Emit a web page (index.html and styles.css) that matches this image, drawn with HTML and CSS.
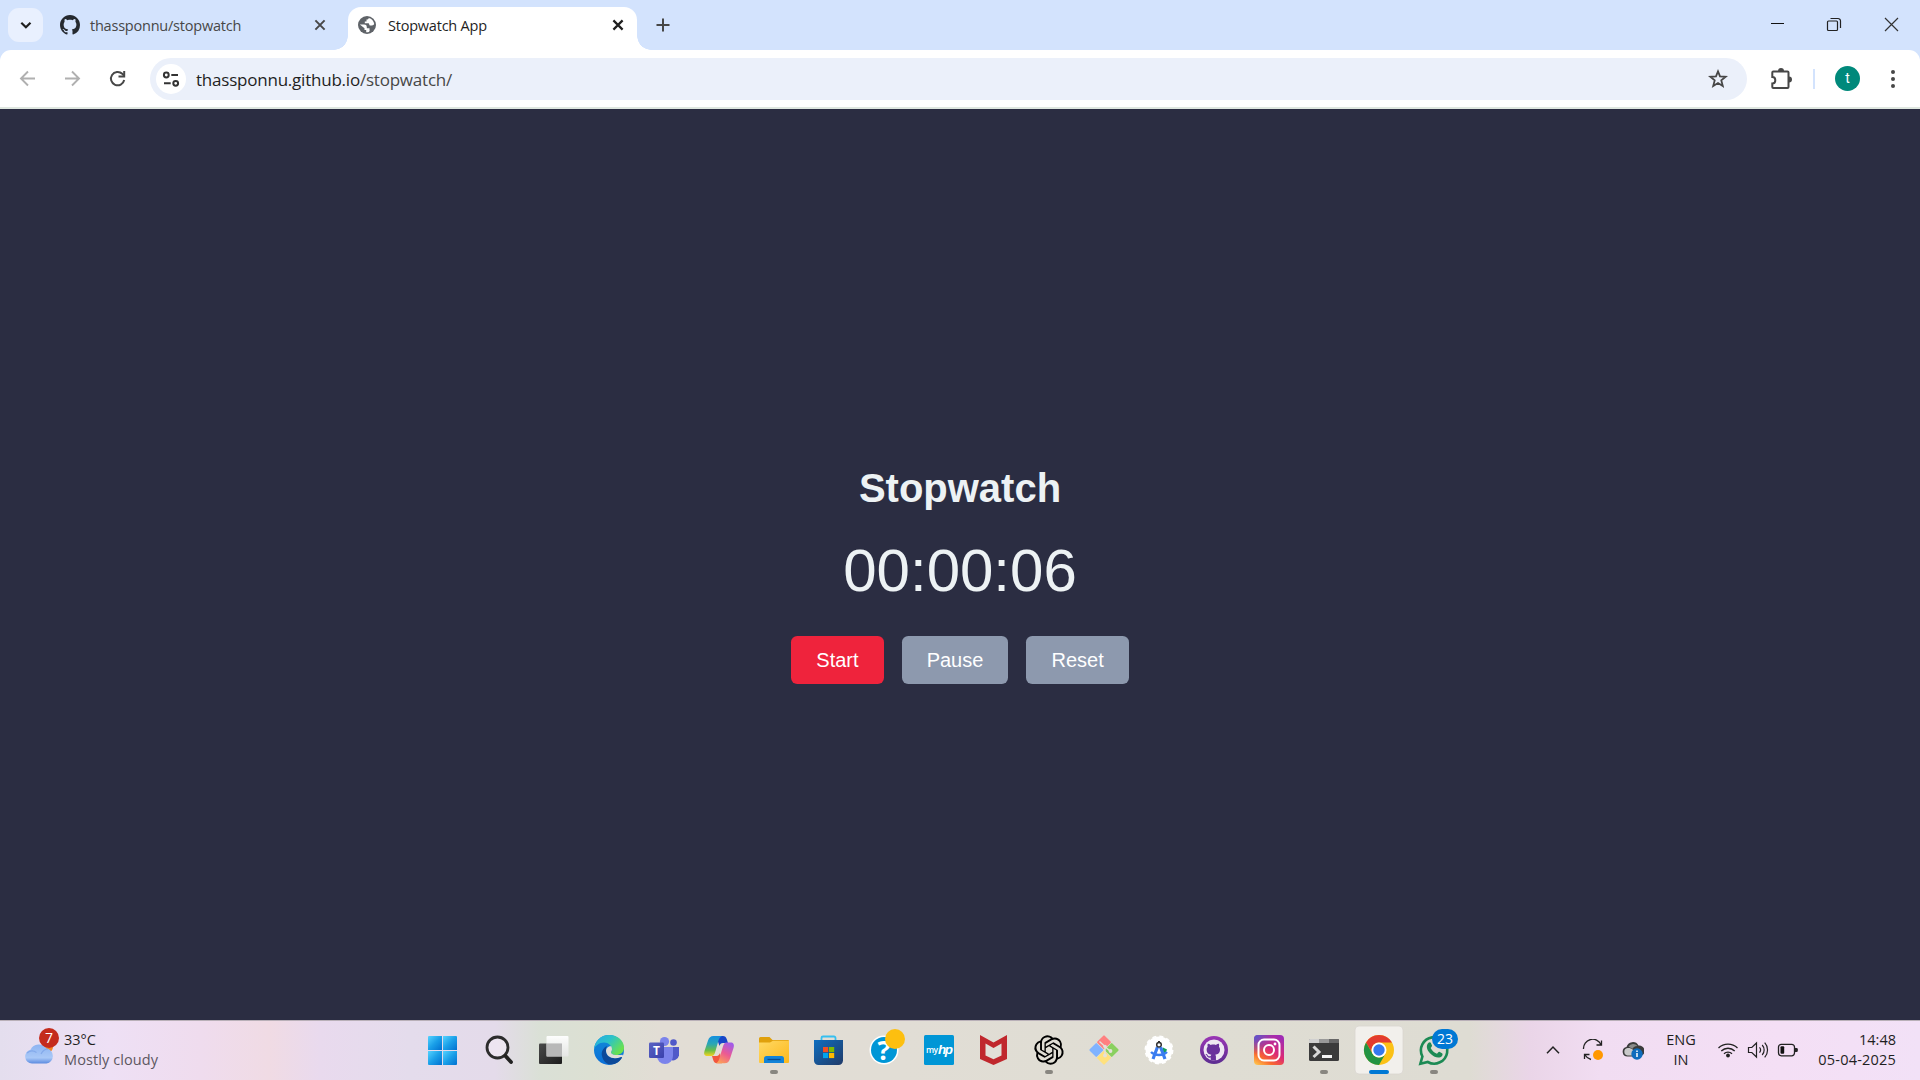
FILE: index.html
```html
<!DOCTYPE html>
<html lang="en">
<head>
<meta charset="utf-8">
<title>Stopwatch App</title>
<link rel="stylesheet" href="styles.css">
</head>
<body>
<svg width="0" height="0" class="defs" aria-hidden="true">
  <defs>
    <path id="octocat" d="M8 0C3.58 0 0 3.58 0 8c0 3.54 2.29 6.53 5.47 7.59.4.07.55-.17.55-.38 0-.19-.01-.82-.01-1.49-2.01.37-2.53-.49-2.69-.94-.09-.23-.48-.94-.82-1.13-.28-.15-.68-.52-.01-.53.63-.01 1.08.58 1.23.82.72 1.21 1.87.87 2.33.66.07-.52.28-.87.51-1.07-1.78-.2-3.64-.89-3.64-3.95 0-.87.31-1.59.82-2.15-.08-.2-.36-1.02.08-2.12 0 0 .67-.21 2.2.82.64-.18 1.32-.27 2-.27s1.36.09 2 .27c1.53-1.04 2.2-.82 2.2-.82.44 1.1.16 1.92.08 2.12.51.56.82 1.27.82 2.15 0 3.07-1.87 3.75-3.65 3.95.29.25.54.73.54 1.48 0 1.07-.01 1.93-.01 2.2 0 .21.15.46.55.38A8.01 8.01 0 0 0 16 8c0-4.42-3.58-8-8-8z"/>
    <linearGradient id="winG" x1="0" y1="0" x2="1" y2="1"><stop offset="0" stop-color="#55d3ff"/><stop offset=".5" stop-color="#1a9fe8"/><stop offset="1" stop-color="#0070d0"/></linearGradient>
    <linearGradient id="darkG" x1="0" y1="0" x2="1" y2="1"><stop offset="0" stop-color="#4a4a4a"/><stop offset="1" stop-color="#1c1c1c"/></linearGradient>
    <linearGradient id="lightG" x1="0" y1="0" x2="0" y2="1"><stop offset="0" stop-color="#fff" stop-opacity=".95"/><stop offset="1" stop-color="#e8e8e8" stop-opacity=".8"/></linearGradient>
    <linearGradient id="edgeTop" x1="0" y1="0" x2="1" y2=".6"><stop offset="0" stop-color="#25a9e8"/><stop offset=".5" stop-color="#2cc3c7"/><stop offset="1" stop-color="#6be24c"/></linearGradient>
    <linearGradient id="edgeLeft" x1="0" y1="0" x2="0" y2="1"><stop offset="0" stop-color="#118bd8"/><stop offset="1" stop-color="#0b6fd8"/></linearGradient>
    <linearGradient id="teamsG" x1="0" y1="0" x2="1" y2="1"><stop offset="0" stop-color="#5a62c3"/><stop offset="1" stop-color="#3a41ac"/></linearGradient>
    <linearGradient id="copA" x1="0" y1="0" x2="0" y2="1"><stop offset="0" stop-color="#1490e0"/><stop offset=".4" stop-color="#2aa6b5"/><stop offset=".72" stop-color="#6bbd45"/><stop offset="1" stop-color="#f4d321"/></linearGradient>
    <linearGradient id="copB" x1=".7" y1="0" x2=".2" y2="1"><stop offset="0" stop-color="#a25be8"/><stop offset=".5" stop-color="#ec5a92"/><stop offset="1" stop-color="#fda255"/></linearGradient>
    <linearGradient id="folderG" x1="0" y1="0" x2="1" y2="1"><stop offset="0" stop-color="#ffd965"/><stop offset="1" stop-color="#fcb81b"/></linearGradient>
    <linearGradient id="storeG" x1="0" y1="0" x2="1" y2="1"><stop offset="0" stop-color="#0e6ec0"/><stop offset="1" stop-color="#213a68"/></linearGradient>
    <linearGradient id="ghG" x1="0" y1="0" x2="0" y2="1"><stop offset="0" stop-color="#9a35b5"/><stop offset="1" stop-color="#5c2d91"/></linearGradient>
    <linearGradient id="igG" x1=".1" y1="1" x2=".75" y2="0"><stop offset="0" stop-color="#ffc24a"/><stop offset=".25" stop-color="#f9682f"/><stop offset=".55" stop-color="#dc2a75"/><stop offset="1" stop-color="#a02bb4"/></linearGradient>
    <radialGradient id="igBlue" cx="0" cy="0" r=".65"><stop offset="0" stop-color="#4f5bd5"/><stop offset="1" stop-color="#4f5bd5" stop-opacity="0"/></radialGradient>
    <linearGradient id="cloudG" x1="0" y1="0" x2="0" y2="1"><stop offset="0" stop-color="#8db4f2"/><stop offset=".7" stop-color="#a9c8f7"/><stop offset="1" stop-color="#5b8be0"/></linearGradient>
  </defs>
</svg>

<header class="browser">
  <div class="tabstrip">
    <button class="tab-search" aria-label="Search tabs"><svg width="35" height="34" viewBox="0 0 35 34"><path d="M13.3 14.8l4.6 4.4 4.6-4.4" fill="none" stroke="#1f1f1f" stroke-width="2.2"/></svg></button>
    <div class="tab">
      <svg class="favicon" width="20" height="20" viewBox="0 0 16 16"><use href="#octocat" fill="#24292f"/></svg>
      <span class="tab-title muted">thassponnu/stopwatch</span>
      <svg class="tab-close" width="20" height="20" viewBox="-10 -10 20 20"><path d="M-4.6-4.6l9.2 9.2M4.6-4.6l-9.2 9.2" stroke="#474747" stroke-width="2"/></svg>
    </div>
    <div class="tab active">
      <svg class="globe" width="18" height="18" viewBox="0 0 18 18"><circle cx="9" cy="9" r="9" fill="#5f6368"/><path d="M10.800 1.900C10.500 3 9.700 3.500 8.500 3.600v1.800H6.800v1.900h3.900l1 2.100H14c1.100 0 1.900-.7 2.200-1.400a7.300 7.300 0 0 0-5.400-6.100zM1.800 8.500l4.300.1c1.700 0 2.600.8 2.700 2.300v1.300h2.700v1.500c.4.900 0 1.700-.6 2.200a7.300 7.300 0 0 1-2.700.3v-2.200H6.500v-1.700z" fill="#fff"/></svg>
      <span class="tab-title">Stopwatch App</span>
      <svg class="tab-close" width="20" height="20" viewBox="-10 -10 20 20"><path d="M-4.600-4.600l9.200 9.200M4.600-4.600l-9.200 9.200" stroke="#1f1f1f" stroke-width="2.200"/></svg>
    </div>
    <svg class="new-tab" width="20" height="20" viewBox="-10 -10 20 20"><path d="M-6.500 0h13M0-6.500v13" stroke="#474747" stroke-width="2"/></svg>
    <div class="window-controls">
      <svg width="57" height="50" viewBox="-28.500 -25 57 50"><path d="M-6.500-1.500h13" stroke="#111" stroke-width="1"/></svg>
      <svg width="57" height="50" viewBox="-28.500 -25 57 50"><rect x="-7" y="-4" width="10" height="9.500" rx="1" fill="none" stroke="#222" stroke-width="1.200"/><path d="M-4-6.500h7.500a2.500 2.500 0 0 1 2.500 2.500v7" fill="none" stroke="#222" stroke-width="1.200"/></svg>
      <svg width="57" height="50" viewBox="-28.500 -25 57 50"><path d="M-6.500-7L6.500 6M6.500-7L-6.500 6" stroke="#333" stroke-width="1.200"/></svg>
    </div>
  </div>
  <div class="toolbar">
    <div class="nav">
      <svg width="45" height="45" viewBox="-22.500 -22.500 45 45"><path d="M7.500 0H-6M0.500-7L-6.500 0l7 7" fill="none" stroke="#b0b0b0" stroke-width="1.900"/></svg>
      <svg width="45" height="45" viewBox="-22.500 -22.500 45 45"><path d="M-7.500 0H6M-.500-7l7 7-7 7" fill="none" stroke="#b0b0b0" stroke-width="1.900"/></svg>
      <svg width="45" height="45" viewBox="-22.500 -22.500 45 45"><path d="M6.700 1.500A6.700 6.700 0 1 1 4.800-4.700L6.500-3" fill="none" stroke="#474747" stroke-width="2"/><path d="M6.700-7.500v5.600H1" fill="none" stroke="#474747" stroke-width="2"/></svg>
    </div>
    <div class="omnibox">
      <span class="site-info"><svg width="30" height="30" viewBox="-15 -15 30 30"><g fill="none" stroke="#333" stroke-width="2"><circle cx="-4.700" cy="-4" r="2.400"/><path d="M.3-4h6.700M-7 4.300h6.700"/><circle cx="4.700" cy="4.300" r="2.400"/></g></svg></span>
      <span class="url"><b>thassponnu.github.io</b>/stopwatch/</span>
      <svg class="star" width="20" height="20" viewBox="-10 -10 20 20"><path d="M0-7.600l2 5 5.700.4-4.400 3.600 1.500 5.700L0 4-4.800 7.100l1.500-5.700-4.400-3.600 5.700-.4z" fill="none" stroke="#474747" stroke-width="1.800"/></svg>
    </div>
    <svg class="ext" width="24" height="24" viewBox="-12 -12 24 24"><path d="M-7.700-7.500H6.500a1 1 0 0 1 1 1V8a1 1 0 0 1-1 1h-14.200a1 1 0 0 1-1-1V4.500c4 0 4-6.500 0-6.500v-4.500a1 1 0 0 1 1-1z" fill="none" stroke="#474747" stroke-width="2"/><path d="M-3-8a3 3 0 0 1 6 0zM8-2.500a3 3 0 0 1 0 6z" fill="#474747"/></svg>
    <span class="divider"></span>
    <span class="avatar">t</span>
    <svg class="dots" width="8" height="24" viewBox="-4 -12 8 24"><g fill="#474747"><circle cy="-7" r="2"/><circle r="2"/><circle cy="7" r="2"/></g></svg>
  </div>
</header>

<main class="page">
  <h1>Stopwatch</h1>
  <div class="time">00:00:06</div>
  <div class="buttons">
    <button class="btn start">Start</button>
    <button class="btn">Pause</button>
    <button class="btn">Reset</button>
  </div>
</main>

<footer class="taskbar">
  <div class="weather">
    <div class="weather-icon">
      <svg width="32" height="24" viewBox="0 0 32 24"><circle cx="23.500" cy="6" r="5.500" fill="#f58220"/><path d="M8 22.500a7 7 0 0 1-1.500-13.800A9.200 9.200 0 0 1 22.500 7.500a7.600 7.600 0 0 1 0 15z" fill="url(#cloudG)"/><path d="M3 12c3-2.500 6.500-2.500 9.500-.5M17 13c1.500-3 4-5 7-5" fill="none" stroke="#779fe6" stroke-width="1.200" opacity=".7"/></svg>
      <span class="alert">7</span>
    </div>
    <div class="weather-text"><span>33°C</span><span class="dim">Mostly cloudy</span></div>
  </div>

  <nav class="apps">
    <svg class="app" viewBox="-28 -30 55 60"><g fill="url(#winG)"><path d="M-16-13a1 1 0 0 1 1-1h13v14h-14z"/><path d="M-1-14h13a1 1 0 0 1 1 1v13h-14z"/><path d="M-16 1h14v14h-13a1 1 0 0 1-1-1z"/><path d="M-1 1h14v13a1 1 0 0 1-1 1h-13z"/></g></svg>
    <svg class="app" viewBox="-28 -30 55 60"><circle cx="-1.500" cy="-2.500" r="10.500" fill="#f1eaf3" fill-opacity=".7" stroke="#2c2c2c" stroke-width="2.800"/><path d="M6.500 6l5.500 6" stroke="#222" stroke-width="3.800" stroke-linecap="round"/></svg>
    <svg class="app" viewBox="-28 -30 55 60"><rect x="-15" y="-6.500" width="23" height="20.500" rx="1" fill="url(#darkG)"/><rect x="-7.500" y="-14" width="22" height="20.500" rx="1" fill="url(#lightG)"/><rect x="-7.500" y="-6.500" width="15.500" height="13" fill="#b8b8b8"/></svg>
    <svg class="app" viewBox="-28 -30 55 60"><circle r="15" fill="url(#edgeLeft)"/><path d="M-15-1C-14-9-8-15 0-15 9-15 15-9 15-2.500 15 3 11 5 7 5 3.500 5 2 3.500 2 2.300 2 1.300 3 1 3-1 3-4-.5-7.500-5-7.500-10-7.500-14-4-15-1z" fill="url(#edgeTop)"/><path d="M-2-4C-6-2-8 2-7 6c1 5 5 8.500 9 8.500 5 0 9-3 11-7 .2-.6-.4-.8-1-.5C4 10-2.500 7-3 1c-.1-2.200.5-3.800 1-5z" fill="#0c4a9a"/><path d="M2.500-3.500C0-4.500-3-2-3 1c.5 6 7 9 15 6 .6-.3 1.100 0 1 .5l1.500-.5-1-2.300C11 5 9 5.200 7 5 3.500 5 2 3.500 2 2.300 2 1.300 3 1 3-1z" fill="#e1ded7"/></svg>
    <svg class="app" viewBox="-28 -30 55 60"><circle cx="9.500" cy="-7.500" r="3.300" fill="#5059c9"/><path d="M5-3h10v8.500a6 6 0 0 1-9 4z" fill="#5059c9"/><circle cx=".5" cy="-8.500" r="4.600" fill="#7b83eb"/><path d="M-7-3H9v9a7.500 7.500 0 0 1-16 0z" fill="#7b83eb"/><rect x="-15" y="-7.500" width="15" height="15.500" rx="1.300" fill="url(#teamsG)"/><text x="-7.500" y="4.800" class="teams-t">T</text></svg>
    <svg class="app" viewBox="-28 -30 55 60"><path d="M-3-14H4c2 0 3 1 3.700 3L9-7H4c-2 0-3 1-3.500 3z" fill="#1746c8"/><path d="M3 13.200h-5c-2 0-3-1-3.700-3L-7 6h4.500c2 0 3-1.500 3.500-3z" fill="#f2563d"/><path d="M1-14h-6.500c-3 0-4.500 1.500-5.500 4.500L-14.500 1c-1 3.500 0 5 3 5h4c2 0 3-1.500 3.700-4l3-10.500C-.2-11 .8-13 3-14z" fill="url(#copA)"/><path d="M-1 13.200h6.500c3 0 4.500-1.500 5.500-4.500L14.500-2c1-3.500 0-5.500-3-5.500h-4c-2 0-3 2-3.700 4.500l-3 10C.2 10-.8 12.200-3 13.200z" fill="url(#copB)"/></svg>
    <svg class="app" viewBox="-28 -30 55 60"><path d="M-15-11.500a1.500 1.500 0 0 1 1.500-1.500h9l3 3H14a1 1 0 0 1 1 1v6h-30z" fill="#e0a00c"/><path d="M-15-7.500h11l3-1.800h16V12a1 1 0 0 1-1 1h-28a1 1 0 0 1-1-1z" fill="url(#folderG)"/><path d="M-10 13V8.500A2.500 2.500 0 0 1-7.500 6h15A2.500 2.500 0 0 1 10 8.500V13z" fill="#1383d8"/><path d="M-6.500 9.500h13" stroke="#0b4c8f" stroke-width="1.300"/><rect x="-4" y="20" width="8" height="4" rx="2" fill="#888680"/></svg>
    <svg class="app" viewBox="-28 -30 55 60"><path d="M-7.500-9v-3a1.500 1.500 0 0 1 1.500-1.500h11A1.500 1.500 0 0 1 6.500-12v3" fill="none" stroke="#35bff0" stroke-width="1.800"/><path d="M-15-10h29v20.500a4.500 4.500 0 0 1-4.500 4.500h-20a4.500 4.500 0 0 1-4.500-4.500z" fill="url(#storeG)"/><path d="M-6-3h5.200v5.200H-6z" fill="#f25022"/><path d="M0-3h5.200v5.200H0z" fill="#7fba00"/><path d="M-6 3h5.200v5.100H-6z" fill="#00a4ef"/><path d="M0 3h5.200v5.100H0z" fill="#ffb900"/></svg>
    <svg class="app" viewBox="-28 -30 55 60"><circle r="14.500" fill="#fff"/><circle r="13" fill="#0096d6"/><text x="0" y="9.500" class="help-q">?</text><circle cx="11" cy="-11" r="10" fill="#fdbf0f"/></svg>
    <svg class="app" viewBox="-28 -30 55 60"><rect x="-15" y="-15" width="30" height="30" rx="1.500" fill="#0096d6"/><text x="-13" y="3" class="my">my</text><text x="-1" y="4" class="hp">hp</text></svg>
    <svg class="app" viewBox="-28 -30 55 60"><path d="M-14-15L-.5-7.500 13-15V9L-.5 15-14 9z" fill="#c0272d"/><path d="M-8.500-6.500l8 4.500 8-4.500V5.500l-8 3.800-8-3.800z" fill="#e2dfd8"/></svg>
    <svg class="app" viewBox="-28 -30 55 60"><g transform="translate(-14.700 -14.700) scale(1.225)"><path d="M22.282 9.821a5.985 5.985 0 0 0-.516-4.911 6.046 6.046 0 0 0-6.510-2.900A6.065 6.065 0 0 0 4.981 4.182a5.985 5.985 0 0 0-3.998 2.900 6.046 6.046 0 0 0 .743 7.097 5.980 5.980 0 0 0 .511 4.911 6.051 6.051 0 0 0 6.515 2.900A5.985 5.985 0 0 0 13.260 24a6.056 6.056 0 0 0 5.772-4.206 5.989 5.989 0 0 0 3.998-2.900 6.056 6.056 0 0 0-.748-7.073zM13.260 22.429a4.476 4.476 0 0 1-2.876-1.041l.142-.080 4.778-2.758a.795.795 0 0 0 .393-.681v-6.737l2.020 1.169a.071.071 0 0 1 .038.052v5.583a4.504 4.504 0 0 1-4.495 4.494zM3.599 18.304a4.471 4.471 0 0 1-.535-3.014l.142.085 4.783 2.758a.771.771 0 0 0 .781 0l5.843-3.369v2.332a.080.080 0 0 1-.033.062L9.740 19.950a4.499 4.499 0 0 1-6.141-1.646zM2.341 7.896a4.485 4.485 0 0 1 2.366-1.973V11.600a.766.766 0 0 0 .388.677l5.814 3.354-2.020 1.169a.076.076 0 0 1-.071 0l-4.830-2.787A4.504 4.504 0 0 1 2.341 7.872zM18.937 11.751L13.104 8.364 15.119 7.200a.076.076 0 0 1 .071 0l4.830 2.791a4.494 4.494 0 0 1-.677 8.104v-5.677a.790.790 0 0 0-.407-.667zM20.948 8.728l-.142-.085-4.774-2.782a.776.776 0 0 0-.785 0L9.409 9.230V6.897a.066.066 0 0 1 .028-.062l4.830-2.787a4.499 4.499 0 0 1 6.680 4.660zM8.307 12.863l-2.020-1.164a.080.080 0 0 1-.038-.057V6.074a4.499 4.499 0 0 1 7.376-3.454l-.142.081L8.704 5.459a.795.795 0 0 0-.393.681zM9.404 10.498l2.602-1.500 2.607 1.500v2.999l-2.597 1.500-2.607-1.500z" fill="#000"/></g><rect x="-4" y="20" width="8" height="4" rx="2" fill="#888680"/></svg>
    <svg class="app" viewBox="-28 -30 55 60"><g transform="rotate(45)"><rect x="-10.600" y="-10.600" width="10.300" height="10.300" rx="1" fill="#ff8080"/><rect x=".3" y="-10.600" width="10.300" height="10.300" rx="1" fill="#8ad05f"/><rect x=".3" y=".3" width="10.300" height="10.300" rx="1" fill="#ffe17d"/><rect x="-10.600" y=".3" width="10.300" height="10.300" rx="1" fill="#80b3ff"/></g><path d="M-4.500-8.500L1-3.500v9M1-3.500l5 4.500" fill="none" stroke="#e4e1da" stroke-width="1.400"/><g fill="#e4e1da"><circle cx="1" cy="-3.500" r="1.800"/><circle cx="1" cy="5.500" r="1.900"/><circle cx="6.500" cy="1" r="1.900"/></g></svg>
    <svg class="app" viewBox="-28 -30 55 60"><circle r="13.400" fill="#fff"/><circle r="13.700" fill="none" stroke="#fff" stroke-width="1.500" stroke-dasharray="4 3.170"/><path d="M4-2.500L8-.5 6.500 3H2z" fill="#13a05c"/><path d="M-1.500-3L-6 9M1.500-3L6 9" stroke="#3a7cf0" stroke-width="3.200"/><path d="M-8 2c4 4 12 4 16 0" fill="none" stroke="#3a7cf0" stroke-width="2.400"/><path d="M0-9v4" stroke="#333" stroke-width="2"/><circle cy="-5.300" r="2.300" fill="#fff" stroke="#333" stroke-width="1.500"/></svg>
    <svg class="app" viewBox="-28 -30 55 60"><circle r="14" fill="url(#ghG)"/><circle r="10.500" fill="#eee7f2"/><g transform="translate(-10.500 -10.500) scale(1.313)"><path d="M5.470 15.590V13.720c-2.010.370-2.530-.490-2.690-.940-.090-.230-.480-.940-.820-1.130-.280-.150-.680-.520-.010-.530.630-.010 1.080.580 1.230.820.720 1.210 1.870.870 2.330.660.070-.520.280-.870.510-1.070-1.780-.200-3.640-.890-3.640-3.950 0-.870.310-1.590.820-2.150-.080-.200-.360-1.020.080-2.120 0 0 .670-.210 2.200.820.640-.180 1.320-.270 2-.270s1.360.090 2 .270c1.530-1.040 2.200-.820 2.200-.820.440 1.100.160 1.920.080 2.120.510.560.820 1.270.820 2.150 0 3.070-1.870 3.750-3.650 3.950.290.250.540.730.540 1.480v3.200z" fill="#69309c"/></g></svg>
    <svg class="app" viewBox="-28 -30 55 60"><rect x="-15" y="-15" width="30" height="30" rx="4" fill="url(#igG)"/><rect x="-15" y="-15" width="30" height="30" rx="4" fill="url(#igBlue)"/><g fill="none" stroke="#fff" stroke-width="2"><rect x="-10.500" y="-10.500" width="21" height="21" rx="5.500"/><circle r="5"/></g><circle cx="6" cy="-6" r="1.400" fill="#fff"/></svg>
    <svg class="app" viewBox="-28 -30 55 60"><rect x="-15" y="-11" width="30" height="22" rx="1.500" fill="#3b3b3b"/><path d="M-15-7v-3a1 1 0 0 1 1-1h9v4z" fill="#d0d0d0"/><path d="M-5-11H5v4H-5z" fill="#999"/><path d="M5-11h9a1 1 0 0 1 1 1v3H5z" fill="#666"/><path d="M-10.500-3.500L-5 2l-5.500 5" fill="none" stroke="#d8d8d8" stroke-width="3"/><path d="M-2 6.500H8" stroke="#f4f4f4" stroke-width="3"/><rect x="-4" y="20" width="8" height="4" rx="2" fill="#888680"/></svg>
    <svg class="app" viewBox="-28 -30 55 60"><rect x="-24" y="-24" width="48" height="48" rx="4" fill="#f2f0ec" stroke="#d9d6d0" stroke-width=".8"/><circle r="15" fill="#fbc116"/><path d="M-13-7.500A15 15 0 0 1 13-7.500H0A7.500 7.500 0 0 0-6.500 3.750z" fill="#e33b2e"/><path d="M-13-7.500L-6.500 3.750A7.500 7.500 0 0 0 6.500 3.750L0 15A15 15 0 0 1-13-7.500z" fill="#229342"/><circle r="7.500" fill="#fff"/><circle r="5.700" fill="#3578ee"/><rect x="-10" y="20" width="20" height="4" rx="2" fill="#0078d4"/></svg>
    <svg class="app wide" viewBox="-28 -30 55 60"><path d="M-13.600 13.700l2-7.200A13.200 13.200 0 1 1-6.200 12z" fill="none" stroke="#1c8a54" stroke-width="2.600"/><path d="M-5.500-7.200c.8-.8 2-.7 2.400.2l1.100 2.600c.3.700-.9 2-1.400 2.500C-2 .8 0 2.600 3 3.700c.6-.5 1.700-2.200 2.400-1.900L8 3.200c.9.400.6 1.900 0 2.700C5.500 9 0 7.500-4 3.300-7.500-.5-8.200-4.500-5.500-7.200z" fill="#1c8a54"/><rect x="-2" y="-21" width="26" height="20" rx="10" fill="#0078d4"/><text x="11" y="-6" class="badge">23</text><rect x="-4" y="20" width="8" height="4" rx="2" fill="#888680"/></svg>
  </nav>

  <div class="tray">
    <svg width="20" height="20" viewBox="-10 -10 20 20"><path d="M-6 3.200L0-3l6 6.200" fill="none" stroke="#222" stroke-width="1.500"/></svg>
    <svg class="sync" width="22" height="22" viewBox="-11 -11 22 22"><path d="M-9.500-1A9.200 9.200 0 0 1 8-5.500M8.500-9.500V-5H3.500M-3.500 4.500h-5V9M-8 5c1.500 2.500 3.500 3.800 6 4.500" fill="none" stroke="#222" stroke-width="1.300"/><circle cx="5" cy="5" r="5" fill="#ff9800"/></svg>
    <svg class="cloud" width="22" height="22" viewBox="-11 -11 22 22"><path d="M-5.500 6.500a4.800 4.800 0 0 1-1-9.500A6.500 6.500 0 0 1 5.500-4.500a5.500 5.500 0 0 1 1 11z" fill="#3b3b3b"/><path d="M-5.500 5.500a3.800 3.800 0 0 1 0-7.500c3-.5 7 1 9 7.500z" fill="#c9c9c9"/><path d="M-4.500-3.500a5.500 5.500 0 0 1 9-.5c-3 0-4.500 1.500-5.300 3-1-.9-2-1.500-3.700-2.500z" fill="#8b8b8b"/><circle cx="4" cy="4" r="5.700" fill="#0f6cbd"/><path d="M4 3v4M4 .5v1.400" stroke="#fff" stroke-width="1.500"/></svg>
    <div class="lang"><span>ENG</span><span>IN</span></div>
    <svg class="wifi" width="22" height="22" viewBox="-11 -11 22 22"><g fill="none" stroke="#222" stroke-width="1.300"><path d="M-9.500-2a13.500 13.500 0 0 1 19 0M-6.700 1a9.500 9.500 0 0 1 13.400 0M-4 3.800a5.700 5.700 0 0 1 8 0"/></g><circle cy="5.500" r="1.900" fill="#222"/></svg>
    <svg class="sound" width="22" height="22" viewBox="-11 -11 22 22"><g fill="none" stroke="#222" stroke-width="1.200"><path d="M-9.500-2.500h3.300L-1.500-7V7l-4.700-4.500h-3.300z"/><path d="M1.500-2.600a4 4 0 0 1 0 5.200M4.200-5a7.400 7.400 0 0 1 0 10M6.700-7.300a10.800 10.800 0 0 1 0 14.600"/></g></svg>
    <svg class="battery" width="22" height="22" viewBox="-11 -11 22 22"><rect x="-9.500" y="-5.700" width="16" height="11.500" rx="2.800" fill="none" stroke="#222" stroke-width="1.300"/><rect x="-7.500" y="-3.700" width="3.700" height="7.500" rx="1" fill="#111"/><path d="M7-2h1.500a1.300 1.300 0 0 1 1.300 1.300v1.400A1.300 1.300 0 0 1 8.500 2H7z" fill="#222"/></svg>
    <div class="clock"><span>14:48</span><span class="date">05-04-2025</span></div>
  </div>
</footer>
</body>
</html>
```
FILE: styles.css
```css
* { box-sizing: border-box; }
html, body { margin: 0; height: 100%; overflow: hidden; }
body {
  display: flex;
  flex-direction: column;
  height: 1080px;
  font-family: "Open Sans", "Noto Sans", sans-serif;
  color: #1f1f1f;
  background: #2b2d42;
}
svg { display: block; flex: none; }
button { border: 0; padding: 0; background: none; }
.defs { position: absolute; }

/* browser chrome */
.browser { flex: none; background: #d3e3fd; }
.tabstrip { display: flex; align-items: center; height: 50px; padding-left: 8px; }
.tab-search { width: 35px; height: 34px; border-radius: 11px; background: #e9f0fe; }
.tab { display: flex; align-items: center; width: 305px; height: 50px; padding: 0 18px 0 17px; }
.tab-title {
  flex: 1;
  margin-left: 10px;
  padding-top: 2px;
  font-size: 14.5px;
  letter-spacing: -.22px;
  line-height: 20px;
  white-space: nowrap;
}
.muted { color: #474747; }
.tab.active {
  position: relative;
  width: 289px;
  height: 43px;
  margin-top: 7px;
  padding: 0 9px 7px 10px;
  background: #fff;
  border-radius: 13px 13px 0 0;
}
.tab.active::before, .tab.active::after {
  content: "";
  position: absolute;
  bottom: 0;
  width: 14px;
  height: 14px;
}
.tab.active::before { left: -14px; background: radial-gradient(circle at 0 0, transparent 13.5px, #fff 14px); }
.tab.active::after { right: -14px; background: radial-gradient(circle at 100% 0, transparent 13.5px, #fff 14px); }
.active .tab-title { margin-left: 12px; }
.new-tab { margin-left: 16px; }
.window-controls { display: flex; margin-left: auto; }

.toolbar {
  display: flex;
  align-items: center;
  height: 59px;
  padding: 0 23px 0 5px;
  background: #fff;
  border-bottom: 2px solid #dfe7e0;
  border-radius: 11px 11px 0 0;
}
.nav { display: flex; }
.omnibox {
  display: flex;
  align-items: center;
  width: 1597px;
  flex: none;
  height: 42px;
  margin-left: 10px;
  padding: 0 19px 0 6px;
  border-radius: 21px;
  background: #ebf0fa;
}
.site-info { width: 30px; height: 30px; border-radius: 50%; background: #fff; }
.url { flex: 1; margin-left: 10px; padding-top: 2px; font-size: 17px; letter-spacing: -.22px; color: #474747; }
.url b { font-weight: 400; color: #1f1f1f; }
.ext { margin-left: 22px; }
.divider { width: 2px; height: 20px; margin-left: 20px; background: #d3e3fd; }
.avatar {
  width: 25px;
  height: 25px;
  margin-left: 20px;
  border-radius: 50%;
  background: #00897b;
  color: #fff;
  font: 14px/25px Roboto, sans-serif;
  text-align: center;
}
.dots { margin-left: auto; }

/* stopwatch page */
.page {
  flex: 1;
  display: flex;
  flex-direction: column;
  align-items: center;
  justify-content: center;
  color: #edf2f4;
  font-family: "Liberation Sans", Arial, sans-serif;
}
.page h1 { margin: 25.8px 0 25px; font-size: 40px; line-height: 46px; }
.time { margin-bottom: 31px; font-size: 60px; line-height: 69px; }
.buttons { display: flex; gap: 18.1px; margin-bottom: 6.25px; }
.btn {
  padding: 13.5px 25px 11.5px;
  border-radius: 6.25px;
  background: #8d99ae;
  color: #fff;
  font: 20px/23px "Liberation Sans", Arial, sans-serif;
}
.start { background: #ef233c; }

/* taskbar */
.taskbar {
  flex: none;
  display: flex;
  height: 60px;
  border-top: 1px solid #b9b0b8;
  background: linear-gradient(90deg, #e4deee 0, #eee0f5 110px, #efdcee 200px, #f0dbe4 270px, #e9daee 320px, #e4dcec 410px, #e4dbea 495px, #dae0d6 540px, #dce0d3 590px, #e2ddd5 660px, #e1ddd5 900px, #dfddd3 1200px, #dedcd3 1470px, #ead5e8 1530px, #f1ddf2 1600px, #f4dff5 1780px, #f2e1f7 100%);
  font-size: 14.5px;
  line-height: 20px;
}
.weather { display: flex; width: 416px; padding: 8px 0 0 24px; }
.weather-icon { position: relative; width: 32px; height: 40px; padding-top: 12px; }
.alert {
  position: absolute;
  left: 15px;
  top: -1px;
  width: 20px;
  height: 20px;
  border-radius: 50%;
  background: #c42b1c;
  color: #fff;
  font-size: 14px;
  line-height: 20px;
  text-align: center;
}
.weather-text { display: flex; flex-direction: column; margin: 1px 0 0 8px; }
.dim { color: #5d5761; letter-spacing: .1px; }
.apps { display: flex; margin-top: -1px; }
.app { width: 55px; height: 60px; }
.app.wide { overflow: visible; }
.teams-t { font: 700 12px "Open Sans", sans-serif; fill: #fff; text-anchor: middle; }
.help-q { font: 700 27px "Open Sans", sans-serif; fill: #fff; text-anchor: middle; }
.my { font: 600 8.5px "Open Sans", sans-serif; fill: #fff; letter-spacing: -.5px; }
.hp { font: italic 700 13.5px "Liberation Sans", sans-serif; fill: #fff; letter-spacing: -1.6px; }
.badge { font: 14px "Open Sans", sans-serif; fill: #fff; text-anchor: middle; }

.tray { display: flex; align-items: center; flex: 1; height: 58px; padding: 0 24px 0 82px; }
.sync { margin-left: 19px; }
.cloud { margin-left: 18px; }
.lang { display: flex; flex-direction: column; align-items: center; width: 40px; margin-left: 17px; }
.wifi { margin-left: 16px; }
.sound { margin-left: 8px; }
.battery { margin-left: 8px; }
.clock { display: flex; flex-direction: column; align-items: flex-end; margin-left: auto; }
.date { letter-spacing: .2px; }
```
